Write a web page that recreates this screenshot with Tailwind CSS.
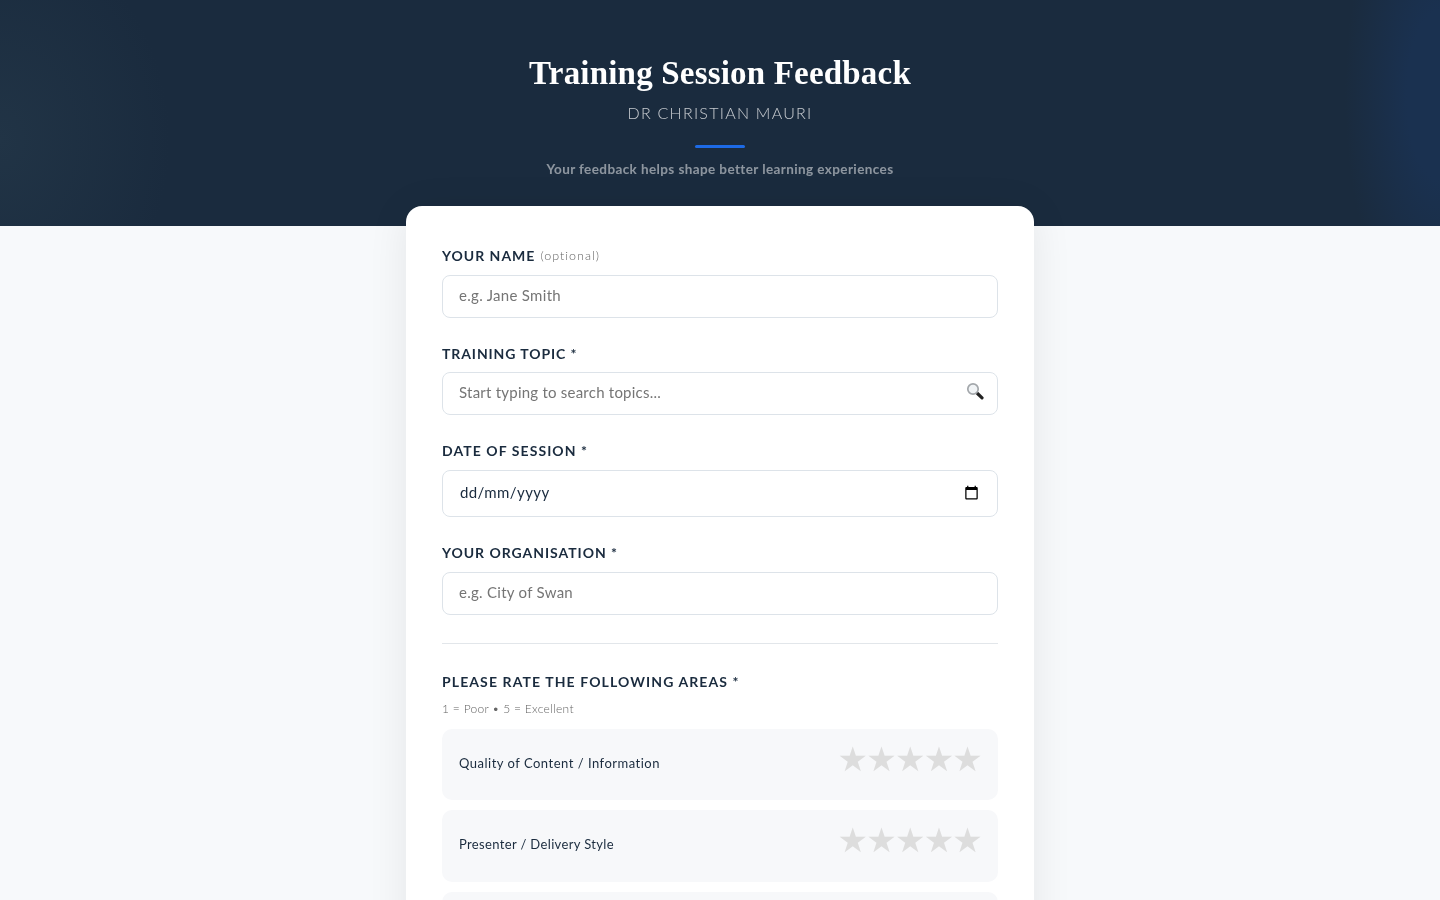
<!DOCTYPE html>
<html lang="en-GB">
<head>
<meta charset="utf-8">
<title>Training Session Feedback</title>
<script src="https://cdn.jsdelivr.net/npm/@tailwindcss/browser@4"></script>
</head>
<body class="bg-[#f7f9fb] font-['Lato',sans-serif] text-[#1a2b3e]">
<div class="h-screen overflow-hidden will-change-transform">
  <header class="h-[226px] pt-[53px] text-center bg-[#1a2b3e] bg-[radial-gradient(170px_210px_at_0%_62%,#213446_0%,transparent_100%),radial-gradient(95px_240px_at_100%_42%,#1a3150_35%,transparent_100%)]">
    <h1 class="font-['Liberation_Serif',serif] font-bold text-[33px] leading-[40px] tracking-[0.19px] text-white">Training Session Feedback</h1>
    <p class="mt-[10px] text-[16px] leading-[20px] font-light tracking-[1.27px] text-white/75">DR CHRISTIAN MAURI</p>
    <div class="mx-auto mt-[22px] h-[3px] w-[50px] rounded-sm bg-[#1d6ae5]"></div>
    <p class="mt-[12px] text-[13.5px] leading-[18px] font-bold tracking-[0.4px] text-white/50">Your feedback helps shape better learning experiences</p>
  </header>
  <main class="relative mx-auto -mt-5 w-[628px] rounded-t-2xl bg-white px-9 pt-[40px] shadow-[0_4px_40px_rgba(0,0,0,0.08)]">
    <div class="flex h-[19px] items-center gap-[5px]">
      <label class="text-[14px] leading-[18px] font-bold tracking-[1px]">YOUR NAME</label>
      <span class="mt-px text-[12.5px] font-light tracking-[1px] text-[#666]">(optional)</span>
    </div>
    <input class="mt-[10px] block h-[43px] w-full rounded-lg border border-[#dde3e9] px-4 pb-1 text-[15px] tracking-[0.3px] outline-none placeholder:text-[#757575]" placeholder="e.g. Jane Smith">

    <label class="mt-[26px] block h-[19px] text-[14px] leading-[19px] font-bold tracking-[0.9px]">TRAINING TOPIC *</label>
    <div class="relative mt-[9px]">
      <input class="block h-[43px] w-full rounded-lg border border-[#dde3e9] px-4 pb-1 text-[15px] tracking-[0.23px] outline-none placeholder:text-[#757575]" placeholder="Start typing to search topics...">
      <svg class="absolute right-[14px] top-[10px] h-[18px] w-[18px]" viewBox="0 0 18 18" aria-hidden="true">
        <line x1="11.5" y1="11.5" x2="16" y2="15.8" stroke="#222" stroke-width="3.2" stroke-linecap="round"/>
        <circle cx="7" cy="7" r="5.2" fill="#f1f4f6" stroke="#a3a7ab" stroke-width="1.7"/>
      </svg>
    </div>

    <label class="mt-[26px] block h-[19px] text-[14px] leading-[19px] font-bold tracking-[1.07px]">DATE OF SESSION *</label>
    <div class="relative mt-[10px]">
      <input readonly value="dd/mm/yyyy" class="block h-[47px] w-full rounded-lg border border-[#dde3e9] pl-[17px] pr-4 pb-1 text-[15px] tracking-[0.4px] text-[#1a2b3e] outline-none">
      <svg class="absolute right-[19px] top-[15px] h-[15px] w-[15px]" viewBox="0 0 24 24" aria-hidden="true"><path fill="#000" d="M20 3h-1V1h-2v2H7V1H5v2H4c-1.1 0-2 .9-2 2v16c0 1.1.9 2 2 2h16c1.1 0 2-.9 2-2V5c0-1.1-.9-2-2-2zm0 18H4V8h16v13z"/></svg>
    </div>

    <label class="mt-[26px] block h-[19px] text-[14px] leading-[19px] font-bold tracking-[0.96px]">YOUR ORGANISATION *</label>
    <input class="mt-[10px] block h-[43px] w-full rounded-lg border border-[#dde3e9] px-4 pb-1 text-[15px] tracking-[0.27px] outline-none placeholder:text-[#757575]" placeholder="e.g. City of Swan">

    <hr class="mt-[28px] border-t border-[#e2e6ea]">

    <label class="mt-[28px] block h-[19px] text-[14px] leading-[19px] font-bold tracking-[1.1px]">PLEASE RATE THE FOLLOWING AREAS *</label>
    <p class="mt-[10px] h-[16px] text-[12px] leading-[16px] font-light tracking-[0.3px] text-[#666]">1 = Poor • 5 = Excellent</p>

    <div class="mt-[12px] flex h-[71px] items-start justify-between rounded-[10px] bg-[#f7f8fa] px-[17px]">
      <span class="mt-[25px] text-[13px] leading-[18px] tracking-[0.5px]">Quality of Content / Information</span>
      <span class="mt-[8px] font-['DejaVu_Sans',sans-serif] text-[34px] leading-[44px] tracking-[-1.8px] text-[#dddddd]">★★★★★</span>
    </div>
    <div class="mt-[10px] flex h-[72px] items-start justify-between rounded-[10px] bg-[#f7f8fa] px-[17px]">
      <span class="mt-[25px] text-[13px] leading-[18px] tracking-[0.35px]">Presenter / Delivery Style</span>
      <span class="mt-[8px] font-['DejaVu_Sans',sans-serif] text-[34px] leading-[44px] tracking-[-1.8px] text-[#dddddd]">★★★★★</span>
    </div>
    <div class="mt-[10px] h-[72px] rounded-[10px] bg-[#f7f8fa]"></div>
  </main>
</div>
</body>
</html>
